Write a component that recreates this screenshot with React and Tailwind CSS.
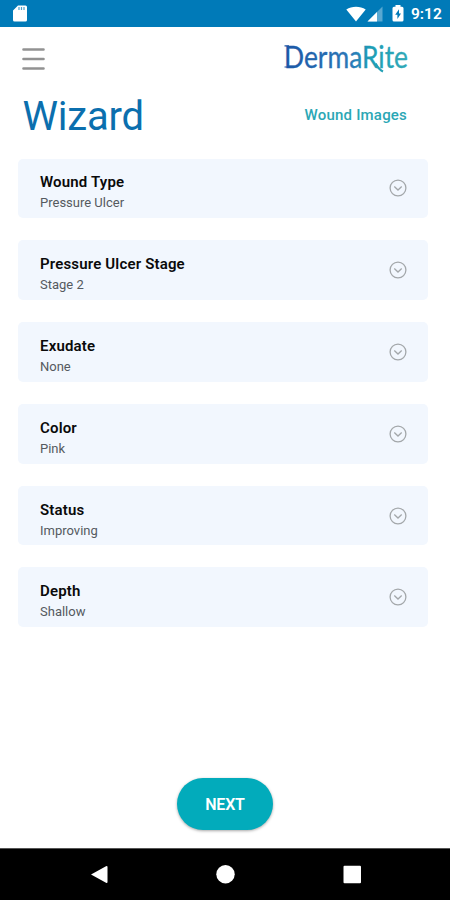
import { useState } from 'react';

const initialFields = [
  { label: 'Wound Type', value: 'Pressure Ulcer' },
  { label: 'Pressure Ulcer Stage', value: 'Stage 2' },
  { label: 'Exudate', value: 'None' },
  { label: 'Color', value: 'Pink' },
  { label: 'Status', value: 'Improving' },
  { label: 'Depth', value: 'Shallow' },
];

const StatusBar = () => (
  <div className="flex h-[27px] shrink-0 items-center justify-between bg-[#007ab8] pl-[13px] pr-[9px] text-white">
    {/* SD card */}
    <svg width="14" height="17" viewBox="0 0 14 17">
      <path d="M5 0.5h7.5a1.5 1.5 0 0 1 1.5 1.5v13a1.5 1.5 0 0 1-1.5 1.5h-11A1.5 1.5 0 0 1 0 15V5.5z" fill="currentColor" />
      <path d="M6 2v3M8.5 2v3M11 2v3" stroke="#007ab8" strokeWidth="1.2" opacity="0.7" />
    </svg>

    <div className="flex items-center">
      {/* Wifi */}
      <svg className="mr-[-1px] ml-[1px]" width="20" height="16" viewBox="0 0 20 16">
        <path d="M0.3 3.5C5.800-0.3 14.2-0.3 19.7 3.500L10 15.5z" fill="currentColor" />
      </svg>
      {/* Signal */}
      <svg className="ml-[2px]" width="16" height="16" viewBox="0 0 16 16">
        <path d="M15.5 0.5v15H0.5z" fill="currentColor" opacity="0.35" />
        <path d="M10 6v9.5H0.5z" fill="currentColor" />
      </svg>
      {/* Battery */}
      <svg className="ml-[9px]" width="12" height="17" viewBox="0 0 12 17">
        <path d="M3.5 0h5v1.8H10a1.5 1.5 0 0 1 1.5 1.5V15A1.5 1.5 0 0 1 10 16.5H2A1.5 1.5 0 0 1 0.5 15V3.3A1.5 1.5 0 0 1 2 1.8h1.5z" fill="currentColor" />
        <path d="M7 4.3L3.2 9.7h2.2v4.3L9 8.5H7z" fill="#007ab8" />
      </svg>
      <span className="ml-[7px] w-[30px] whitespace-nowrap pt-[2px] text-[15.5px] font-semibold leading-none">9:12</span>
    </div>
  </div>
);

const Logo = () => (
  <svg className="overflow-visible" width="130" height="54" viewBox="0 0 130 54" role="img" aria-label="DermaRite">
    <defs>
      <linearGradient id="logo" gradientUnits="userSpaceOnUse" x1="0" y1="0" x2="126" y2="0">
        <stop offset="0" stopColor="#1b55a5" />
        <stop offset="0.55" stopColor="#2c79b8" />
        <stop offset="0.7" stopColor="#1d9db5" />
        <stop offset="1" stopColor="#32a9b8" />
      </linearGradient>
    </defs>
    <text
      x="2"
      y="35.5"
      textLength="124"
      lengthAdjust="spacingAndGlyphs"
      fill="url(#logo)"
      stroke="url(#logo)"
      strokeWidth="0.3"
      fontFamily="Lato, sans-serif"
      fontSize="31"
    >
      DermaRite
    </text>
    {/* Small foot and head on the D */}
    <path d="M2.5 13.8H7M2.5 35H7" stroke="#1b55a5" strokeWidth="1.2" />
    {/* Tail of the R */}
    <path d="M93.5 31.5c2 3.500 4 6.500 7.500 8" fill="none" stroke="url(#logo)" strokeWidth="2.400" />
  </svg>
);

const FieldCard = ({ label, value, isOpen, onToggle }) => (
  <button
    onClick={onToggle}
    aria-expanded={isOpen}
    className="flex h-[59.8px] w-full shrink-0 items-center justify-between rounded-[5px] bg-[#f2f7fe] pl-[22px] pr-[21px] text-left"
  >
    <div className="pt-[9px]">
      <div className="text-[15px] font-semibold leading-5 tracking-[0.17px] text-[#0a0a0a]">{label}</div>
      <div className="text-[13px] leading-[21px] text-[#555a60]">{value}</div>
    </div>
    <svg width="18" height="18" viewBox="0 0 18 18" fill="none" stroke="#a3a7aa" strokeWidth="1.3">
      <circle cx="9" cy="9" r="7.9" />
      <path d="M5.3 7.5L9 11l3.7-3.5" />
    </svg>
  </button>
);

const NavBar = () => (
  <div className="h-[52px] shrink-0 border-t border-[#555] bg-black">
    <svg width="450" height="51" viewBox="0 0 450 51" fill="#fff">
      <path d="M91 25.5L106 17.2q1.5-0.7 1.5 0.8v15q0 1.5-1.5 0.8z" />
      <circle cx="225.5" cy="25.2" r="9.2" />
      <rect x="343.5" y="16.7" width="17.5" height="17.5" rx="1" />
    </svg>
  </div>
);

export default function App() {
  const [openField, setOpenField] = useState(null);

  return (
    <div className="flex h-[900px] w-[450px] flex-col overflow-hidden bg-white font-['Roboto',sans-serif]">
      <StatusBar />

      {/* Header */}
      <div className="flex h-[63px] shrink-0 items-center justify-between pl-[22px] pr-[38px]">
        <button aria-label="Menu">
          <svg className="mt-px" width="23" height="24" viewBox="0 0 23 24" stroke="#929292" strokeWidth="2.6" strokeLinecap="round">
            <path d="M1.5 2.5h20M1.5 12h20M1.5 21.5h20" />
          </svg>
        </button>
        <Logo />
      </div>

      {/* Title */}
      <div className="flex h-[68px] shrink-0 items-start justify-between pl-[22.5px] pr-[43px]">
        <h1 className="pt-[3px] text-[40px] leading-[48px] tracking-[-0.2px] text-[#0b6fae]">Wizard</h1>
        <a href="#" className="pt-[15px] text-[15px] font-medium leading-5 tracking-[0.2px] text-[#2ba7b5]">Wound Images</a>
      </div>

      {/* Fields */}
      <div className="flex flex-1 flex-col gap-[22px] pl-[18px] pr-[22px] pt-[0.5px]">
        {initialFields.map((field, index) => (
          <FieldCard
            key={field.label}
            label={field.label}
            value={field.value}
            isOpen={openField === index}
            onToggle={() => setOpenField(openField === index ? null : index)}
          />
        ))}
      </div>

      <div className="flex shrink-0 justify-center pb-[18px]">
        <button className="h-[52px] w-24 rounded-full bg-[#02abbb] pt-[2px] text-base font-semibold tracking-[-0.2px] text-white shadow-[0_1px_3px_rgba(0,0,0,0.35)]">
          NEXT
        </button>
      </div>

      <NavBar />
    </div>
  );
}
